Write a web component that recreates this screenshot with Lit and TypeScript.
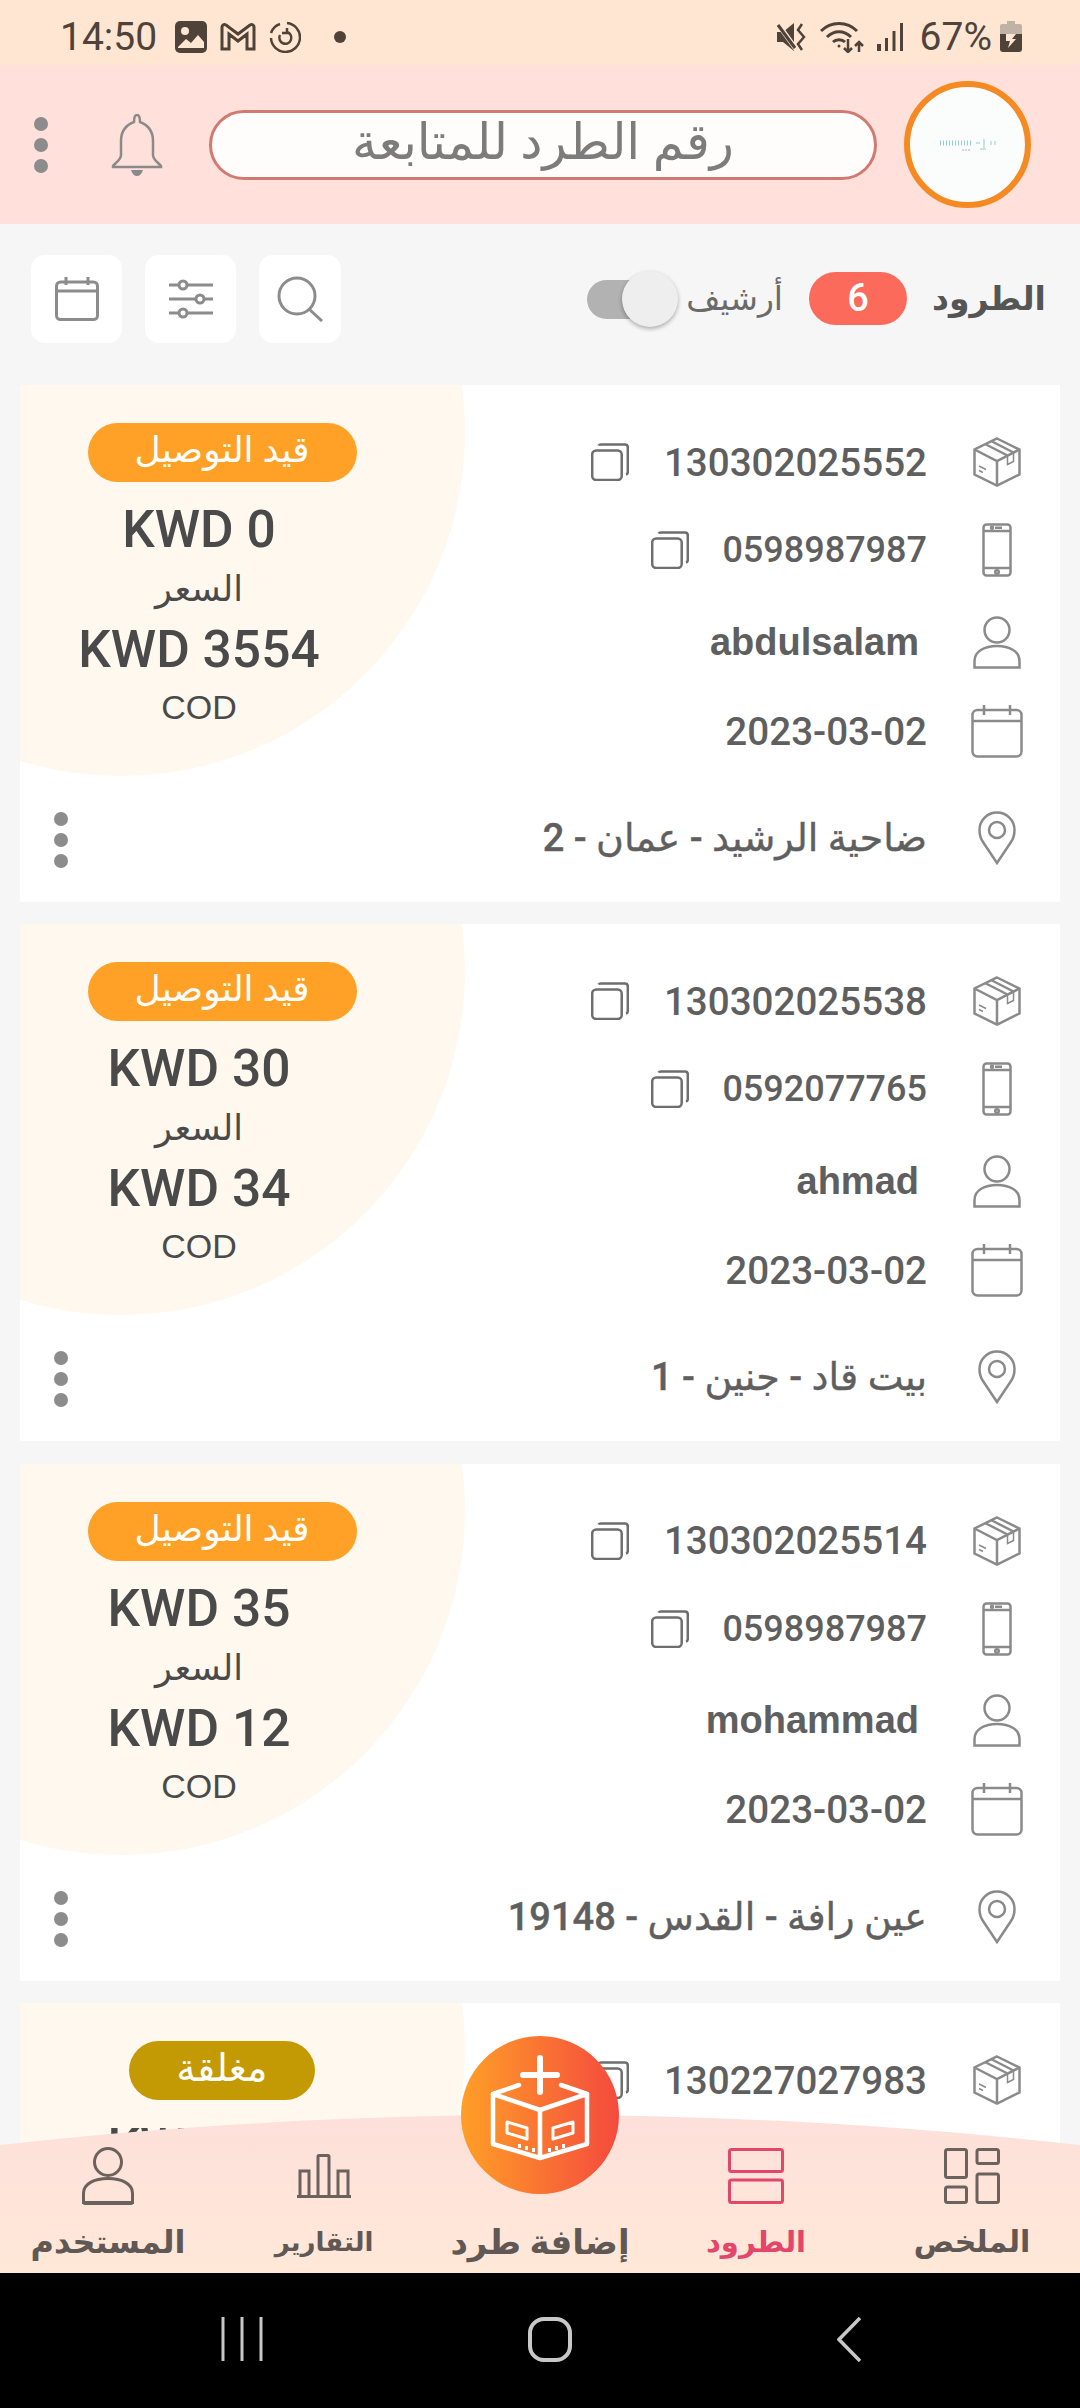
import {css, html, LitElement, svg} from 'lit';
import {customElement} from 'lit/decorators.js';

type Parcel = {
  code: string;
  phone?: string;
  name?: string;
  date?: string;
  address?: string;
  amount: string;
  total?: string;
  status: string;
  closed?: boolean;
};

// the last card runs under the tab bar, only its top part is ever seen
const PARCELS: Parcel[] = [
  {code: '130302025552', phone: '0598987987', name: 'abdulsalam', date: '2023-03-02', address: 'ضاحية الرشيد - عمان - 2', amount: 'KWD 0', total: 'KWD 3554', status: 'قيد التوصيل'},
  {code: '130302025538', phone: '0592077765', name: 'ahmad', date: '2023-03-02', address: 'بيت قاد - جنين - 1', amount: 'KWD 30', total: 'KWD 34', status: 'قيد التوصيل'},
  {code: '130302025514', phone: '0598987987', name: 'mohammad', date: '2023-03-02', address: 'عين رافة - القدس - 19148', amount: 'KWD 35', total: 'KWD 12', status: 'قيد التوصيل'},
  {code: '130227027983', amount: 'KWD 20', status: 'مغلقة', closed: true},
];

const icon = (w: number, h: number, body: unknown, cls = 'line') => html`
  <svg class=${cls} width=${w} height=${h} viewBox="0 0 ${w} ${h}">${body}</svg>
`;

const boxIcon = icon(48, 50, svg`
  <path d="M24 1.500 46.500 12.500V37.500L24 48.500 1.500 37.500V12.500Z" />
  <path d="M1.500 12.500 24 24 46.500 12.500M24 24V48.500M12 7 34.500 18.500M18 4 40.500 15.500" />
  <path d="M34.500 18.500V27.500L40.500 24.500V15.500M6 29l7 3.500M6 33.500l4 2" stroke-width="1.500" />
`);
const phoneIcon = icon(30, 54, svg`
  <rect x="1.500" y="1.500" width="27" height="51" rx="3" />
  <path d="M1.500 8H28.500M1.500 45H28.500M13 4.800H20" />
  <circle cx="15" cy="49" r="1.800" />
  <circle cx="10" cy="4.800" r="1" />
`);
const personIcon = icon(48, 53, svg`
  <circle cx="24" cy="14" r="12.500" />
  <path d="M1.500 51.500V45C1.500 35 12 30 24 30S46.500 35 46.500 45V51.500Z" />
`);
const calendarIcon = icon(52, 53, svg`
  <rect x="1.500" y="5" width="49" height="46.500" rx="5" />
  <path d="M1.500 16H50.500M13 0V10M39 0V10" />
`);
const pinIcon = icon(38, 54, svg`
  <path d="M19 52 5 31C1.500 26 1.500 23 1.500 19A17.500 17.500 0 0 1 36.500 19C36.500 23 36.500 26 33 31Z" />
  <circle cx="19" cy="19" r="8" />
`);
const copyIcon = icon(38, 38, svg`
  <rect x="1.200" y="7.500" width="29.500" height="29.500" rx="4" />
  <path d="M7.500 2.500Q8 1.500 10 1.500H34Q36.800 1.500 36.800 4.500V29Q36.800 31 35 31.500" />
`, 'line copy');

const bellIcon = icon(52, 64, svg`
  <path d="M26 2C23 2 23 6 23 9 15 12 10 18 10 28V42C10 47 5 49 2 53V54H50V53C47 49 42 47 42 42V28C42 18 37 12 29 9 29 6 29 2 26 2Z" />
  <path d="M20 57H32Q30 63 26 63T20 57Z" fill="#8a8a8a" stroke="none" />
`, 'line thin');
const searchIcon = icon(46, 46, svg`
  <circle cx="20" cy="20" r="18" />
  <path d="M32 33 45 45" />
`, 'line tool');
const slidersIcon = icon(46, 42, svg`
  <path d="M1 7H11M19 7H45M1 21H28M36 21H45M1 35H11M19 35H45" />
  <circle cx="15" cy="7" r="4" />
  <circle cx="32" cy="21" r="4" />
  <circle cx="15" cy="35" r="4" />
`, 'line tool');
const calendarTool = icon(44, 44, svg`
  <rect x="1.500" y="5" width="41" height="37.500" rx="4" />
  <path d="M1.500 14H42.500M11 0V8M33 0V8" />
`, 'line tool');

const navSummary = icon(56, 56, svg`
  <rect x="1.500" y="1.500" width="21" height="28" rx="2" />
  <rect x="1.500" y="39" width="21" height="15.500" rx="2" />
  <rect x="33" y="1.500" width="21.500" height="14" rx="2" />
  <rect x="33" y="26" width="21.500" height="28.500" rx="2" />
`, 'line nav');
const navParcels = icon(56, 56, svg`
  <rect x="1.500" y="1.500" width="53" height="22" rx="2" />
  <rect x="1.500" y="32" width="53" height="22.500" rx="2" />
`, 'line nav active');
const navReports = icon(56, 44, svg`
  <path d="M1 42.500H55" />
  <path d="M4 42V17H13V42M22 42V2.500Q22 1.500 23 1.500H32Q33 1.500 33 2.500V42M42 42V17H52V42" />
`, 'line nav');
const navUser = icon(52, 58, svg`
  <circle cx="26" cy="15" r="13.500" />
  <path d="M1.500 55.500V46C1.500 37 12 31.500 26 31.500S50.500 37 50.500 46V55.500Z" />
  <path d="M1.500 56H50.500" stroke-width="4" />
`, 'line nav');

const fabIcon = icon(158, 158, svg`
  <path d="M79 22V56M62 39H96" stroke-width="6" stroke-linecap="round" />
  <path d="M32 58 79 74 126 58V108L79 122 32 108ZM79 74V122" />
  <path d="M32 58 58 49M126 58 100 49" stroke-linecap="round" />
  <path d="M46 86 66 92V103L46 97ZM112 86 92 92V103L112 97Z" stroke-width="3" />
  <path d="M57 110h3M64 112h3M71 114h3M87 114h3M94 112h3M101 110h3" stroke-width="4" />
`, 'fab-svg');

const statusLeft = html`
  <svg width="32" height="32" viewBox="0 0 32 32">
    <rect width="32" height="32" rx="5" fill="#4e4239" />
    <circle cx="10" cy="10" r="4" fill="#ffe6d2" />
    <path d="M3 26 11 18 16 22 23 14 29 21V27H3Z" fill="#ffe6d2" />
  </svg>
  <svg width="36" height="28" viewBox="0 0 36 28" fill="none" stroke="#4e4239" stroke-width="3">
    <path d="M2 26V4C2 2 4 1 6 2L18 11 30 2C32 1 34 2 34 4V26H27V11L18 18 9 11V26Z" />
  </svg>
  <svg width="32" height="32" viewBox="0 0 32 32" fill="none" stroke="#4e4239" stroke-width="2.500">
    <path d="M18 2A14.500 14.500 0 1 1 2 17" />
    <path d="M2 12A14.500 14.500 0 0 1 11 3" />
    <path d="M11 14A6 6 0 1 0 18 11M18 7V12H13" />
  </svg>
  <span class="status-dot"></span>
`;

const statusRight = html`
  <svg width="30" height="28" viewBox="0 0 30 28" fill="#4e4239">
    <path d="M0 9H6L17 0V28L6 19H0Z" />
    <path d="M1 1 19 26" stroke="#ffe6d2" stroke-width="5" />
    <path d="M1 2 18 25" stroke="#4e4239" stroke-width="3" />
    <path d="M25 1 21 7 27 14 21 21 25 27" fill="none" stroke="#4e4239" stroke-width="2.500" />
  </svg>
  <svg width="44" height="32" viewBox="0 0 44 32" fill="none" stroke="#4e4239" stroke-width="3">
    <path d="M1 10C11 0 27 0 37 10M7 16C14 9 24 9 31 16M13 21C16 18 22 18 25 21" />
    <circle cx="19" cy="25" r="1.500" fill="#4e4239" stroke="none" />
    <path d="M28 18V31M24 27 28 31 32 27M39 31V21M35 25 39 21 43 25" stroke-width="2.500" />
  </svg>
  <svg width="27" height="28" viewBox="0 0 27 28" fill="#4e4239">
    <rect x="0" y="21" width="4" height="7" />
    <rect x="8" y="15" width="3" height="13" />
    <rect x="15.500" y="8" width="3" height="20" />
    <rect x="23" y="0" width="3" height="28" />
  </svg>
  <span class="battery-text">67%</span>
  <svg width="22" height="31" viewBox="0 0 22 31">
    <path d="M7 0H15V3H20Q22 3 22 5V13H0V5Q0 3 2 3H7Z" fill="#bfb3a6" />
    <path d="M0 13H22V28Q22 31 19 31H3Q0 31 0 28Z" fill="#4e4239" />
    <path d="M6 13H16L12 18H16L8 27 10 20H6Z" fill="#ffe6d2" />
  </svg>
`;

@customElement('app-root')
export class AppRoot extends LitElement {
  static override styles = css`
    :host {
      display: block;
      width: 1080px;
      height: 2408px;
      font-family: Roboto, 'DejaVu Sans', sans-serif;
    }
    .app {
      position: relative;
      display: flex;
      flex-direction: column;
      height: 2408px;
      overflow: hidden;
      background: #f6f6f6;
    }
    svg {
      display: block;
      flex: none;
    }
    .line {
      fill: none;
      stroke: #8a8a8a;
      stroke-width: 2.5;
    }
    .copy {
      stroke: #6e6e6e;
    }
    .thin {
      stroke-width: 2.5;
    }
    .tool {
      stroke: #8c8c8c;
      stroke-width: 3;
    }
    .nav {
      stroke: #6b625e;
      stroke-width: 3;
    }
    .nav.active {
      stroke: #e4456a;
    }

    .status {
      display: flex;
      align-items: center;
      justify-content: space-between;
      height: 65px;
      padding: 8px 58px 0 60px;
      background: #ffe6d2;
      color: #4e4239;
      font-size: 39px;
      box-sizing: border-box;
    }
    .status-side {
      display: flex;
      align-items: center;
      gap: 13px;
    }
    .status-dot {
      width: 12px;
      height: 12px;
      margin-left: 20px;
      border-radius: 50%;
      background: #4e4239;
    }
    .battery-text {
      margin: 0 -5px 0 3px;
    }
    .time {
      margin-right: 5px;
    }

    .header {
      display: flex;
      align-items: center;
      height: 159px;
      padding: 0 48px 0 34px;
      background: #ffe0da;
      box-sizing: border-box;
    }
    .dots {
      display: flex;
      flex-direction: column;
      gap: 7px;
    }
    .dots span {
      width: 14px;
      height: 14px;
      border-radius: 50%;
      background: #8c8c8c;
    }
    .bell {
      margin: 0 46px 0 63px;
    }
    .track-field {
      width: 668px;
      height: 70px;
      border: 3px solid #d07a72;
      border-radius: 36px;
      background: #fffdfb;
      box-sizing: border-box;
      color: #7c7c7c;
      font-size: 50px;
      line-height: 58px;
      text-align: center;
      white-space: nowrap;
    }
    .logo {
      display: flex;
      align-items: center;
      justify-content: center;
      width: 127px;
      height: 127px;
      margin-left: 27px;
      border: 6px solid #f58a23;
      border-radius: 50%;
      background: #fafdfc;
      box-sizing: border-box;
    }

    .toolbar {
      display: flex;
      align-items: flex-start;
      height: 161px;
      padding: 31px 33px 0 31px;
      box-sizing: border-box;
    }
    .tool-btn {
      display: flex;
      align-items: center;
      justify-content: center;
      width: 91px;
      height: 88px;
      margin-right: 23px;
      border-radius: 14px;
      background: #fff;
    }
    .tool-btn.narrow {
      width: 82px;
    }
    .archive {
      display: flex;
      align-items: center;
      height: 88px;
      margin-left: auto;
    }
    .switch {
      position: relative;
      width: 91px;
      height: 39px;
      margin-right: 11px;
    }
    .switch-track {
      width: 55px;
      height: 39px;
      border-radius: 20px 0 0 20px;
      background: #b2b2b2;
    }
    .switch-knob {
      position: absolute;
      top: -9px;
      right: 0;
      width: 56px;
      height: 56px;
      border-radius: 50%;
      background: #eeeeee;
      box-shadow: 0 2px 4px rgba(0, 0, 0, 0.3);
    }
    .archive-label {
      width: 94px;
      margin-top: -2px;
      color: #6a6a6a;
      font-size: 33px;
      text-align: center;
      white-space: nowrap;
    }
    .count {
      width: 98px;
      height: 53px;
      margin: 17px 0 0 26px;
      border-radius: 27px;
      background: #fb6a5a;
      color: #fff;
      font-size: 38px;
      font-weight: 500;
      line-height: 53px;
      text-align: center;
    }
    .page-title {
      width: 116px;
      margin: 17px 0 0 24px;
      color: #555;
      font-size: 33px;
      font-weight: 700;
      line-height: 53px;
      text-align: center;
      white-space: nowrap;
    }

    .list {
      display: flex;
      flex: 1;
      flex-direction: column;
      gap: 22.4px;
      min-height: 0;
      padding: 0 20px;
      overflow: hidden;
    }
    .card {
      position: relative;
      display: flex;
      flex: none;
      justify-content: space-between;
      height: 517px;
      background: #fff;
      overflow: hidden;
    }
    .blob {
      position: absolute;
      top: -297px;
      left: -243px;
      width: 688px;
      height: 688px;
      border-radius: 50%;
      background: #fff8ef;
    }
    .price {
      position: relative;
      display: flex;
      flex-direction: column;
      align-items: center;
      width: 358px;
      padding-top: 38px;
      box-sizing: border-box;
      color: #4a4a4a;
    }
    .pill {
      width: 269px;
      height: 59px;
      margin: 0 0 18px 46px;
      border-radius: 30px;
      background: #ffa126;
      color: #fff;
      font-size: 36px;
      line-height: 54px;
      text-align: center;
      white-space: nowrap;
    }
    .pill.closed {
      width: 186px;
      background: #c49a04;
      font-size: 38px;
    }
    .amount {
      font-size: 51.5px;
      font-weight: 500;
      line-height: 60px;
    }
    .price-label {
      font-size: 35px;
      line-height: 60px;
    }
    .method {
      font-family: 'Liberation Sans', sans-serif;
      font-size: 34px;
      line-height: 54px;
    }
    .info {
      position: relative;
      display: flex;
      flex-direction: column;
      padding-top: 33px;
    }
    .row {
      display: flex;
      align-items: center;
      justify-content: flex-end;
      height: 88px;
      color: #5f5f5f;
      font-size: 38.6px;
      font-weight: 500;
      white-space: nowrap;
    }
    .row.phone-row {
      font-size: 36px;
    }
    .row.phone-row .copy {
      margin-right: 33px;
    }
    .row.name-row {
      margin-top: 4px;
    }
    .row.date-row {
      margin-top: 1px;
    }
    .row.address-row {
      margin-top: 19px;
      font-size: 38px;
      -webkit-text-stroke: 0.4px #5f5f5f;
    }
    .row.name-row .value {
      padding-right: 8px;
      font-family: 'Liberation Sans', sans-serif;
      font-size: 38px;
      font-weight: 700;
    }
    .row .copy {
      margin-right: 35px;
    }
    .row-icon {
      display: flex;
      align-items: center;
      justify-content: center;
      width: 76px;
      margin: 0 25px 0 32px;
    }
    .card-dots {
      position: absolute;
      left: 34px;
      bottom: 34px;
    }
    .card-dots.dots {
      gap: 7px;
    }

    .tabs {
      position: absolute;
      left: 0;
      right: 0;
      bottom: 135px;
      display: grid;
      grid-template-columns: repeat(5, 216px);
      height: 158px;
      padding-top: 25px;
      box-sizing: border-box;
    }
    .tabs-bg {
      position: absolute;
      inset: 0;
      background: linear-gradient(#fde0da, #ffe8d8);
      clip-path: circle(4875px at 50% 4875px);
    }
    .tab {
      position: relative;
      display: flex;
      flex-direction: column;
      align-items: center;
      color: #5f5854;
      font-size: 30px;
      font-weight: 700;
      white-space: nowrap;
    }
    .tab.active {
      color: #e4456a;
      font-size: 29px;
    }
    .tab.user {
      font-size: 32px;
    }
    .tab.reports {
      font-size: 26px;
    }
    .tab-icon {
      display: flex;
      align-items: center;
      justify-content: center;
      height: 72px;
      margin-bottom: 10px;
    }
    .tab-label {
      line-height: 40px;
    }
    .tab.add {
      font-size: 34px;
    }
    .fab {
      position: absolute;
      top: -79px;
      left: 461px;
      width: 158px;
      height: 158px;
      border-radius: 50%;
      background: linear-gradient(90deg, #ff9f27, #f44a3e);
    }
    .fab-svg {
      fill: none;
      stroke: #fff;
      stroke-width: 4.5;
      stroke-linejoin: round;
    }

    .system-nav {
      display: flex;
      flex: none;
      align-items: flex-start;
      justify-content: space-between;
      height: 135px;
      padding: 44px 218px 0 221px;
      background: #000;
      box-sizing: border-box;
    }
  `;

  private renderCard(p: Parcel) {
    return html`
      <article class="card">
        <div class="blob"></div>
        <div class="price">
          <div class="pill ${p.closed ? 'closed' : ''}" dir="rtl">${p.status}</div>
          <div class="amount">${p.amount}</div>
          ${p.total
            ? html`
                <div class="price-label" dir="rtl">السعر</div>
                <div class="amount">${p.total}</div>
                <div class="method">COD</div>
              `
            : ''}
        </div>
        <div class="info">
          <div class="row">
            ${copyIcon}<span class="value">${p.code}</span>
            <div class="row-icon">${boxIcon}</div>
          </div>
          ${p.phone
            ? html`
                <div class="row phone-row">
                  ${copyIcon}<span class="value">${p.phone}</span>
                  <div class="row-icon">${phoneIcon}</div>
                </div>
                <div class="row name-row">
                  <span class="value">${p.name}</span>
                  <div class="row-icon">${personIcon}</div>
                </div>
                <div class="row date-row">
                  <span class="value">${p.date}</span>
                  <div class="row-icon">${calendarIcon}</div>
                </div>
                <div class="row address-row">
                  <span class="value" dir="rtl">${p.address}</span>
                  <div class="row-icon">${pinIcon}</div>
                </div>
              `
            : ''}
        </div>
        <div class="dots card-dots"><span></span><span></span><span></span></div>
      </article>
    `;
  }

  override render() {
    return html`
      <div class="app">
        <div class="status">
          <div class="status-side"><span class="time">14:50</span>${statusLeft}</div>
          <div class="status-side">${statusRight}</div>
        </div>

        <header class="header">
          <div class="dots"><span></span><span></span><span></span></div>
          <div class="bell">${bellIcon}</div>
          <div class="track-field" dir="rtl">رقم الطرد للمتابعة</div>
          <div class="logo">
            <svg width="56" height="14" viewBox="0 0 56 14" fill="none" stroke="#8fd0ca">
              <path d="M0 5H32" stroke-width="5" stroke-dasharray="1 2" />
              <path d="M36 5H40M44 1V10M40 11H46M51 3V7M55 3V7" stroke-width="1" />
              <path d="M22 12H30" stroke="#c9c9c9" stroke-width="1.500" stroke-dasharray="2 1" />
            </svg>
          </div>
        </header>

        <div class="toolbar">
          <div class="tool-btn">${calendarTool}</div>
          <div class="tool-btn">${slidersIcon}</div>
          <div class="tool-btn narrow">${searchIcon}</div>
          <div class="archive">
            <div class="switch">
              <div class="switch-track"></div>
              <div class="switch-knob"></div>
            </div>
            <div class="archive-label" dir="rtl">أرشيف</div>
          </div>
          <div class="count">6</div>
          <div class="page-title" dir="rtl">الطرود</div>
        </div>

        <div class="list">${PARCELS.map((p) => this.renderCard(p))}</div>

        <nav class="tabs">
          <div class="tabs-bg"></div>
          <div class="tab user">
            <div class="tab-icon">${navUser}</div>
            <div class="tab-label" dir="rtl">المستخدم</div>
          </div>
          <div class="tab reports">
            <div class="tab-icon">${navReports}</div>
            <div class="tab-label" dir="rtl">التقارير</div>
          </div>
          <div class="tab add">
            <div class="tab-icon"></div>
            <div class="tab-label" dir="rtl">إضافة طرد</div>
          </div>
          <div class="tab active">
            <div class="tab-icon">${navParcels}</div>
            <div class="tab-label" dir="rtl">الطرود</div>
          </div>
          <div class="tab">
            <div class="tab-icon">${navSummary}</div>
            <div class="tab-label" dir="rtl">الملخص</div>
          </div>
          <div class="fab">${fabIcon}</div>
        </nav>

        <div class="system-nav">
          <svg width="42" height="44" viewBox="0 0 42 44" stroke="#c8c8c8" stroke-width="3">
            <path d="M2 0V44M21 0V44M40 0V44" />
          </svg>
          <svg width="44" height="45" viewBox="0 0 44 45" fill="none" stroke="#c8c8c8" stroke-width="4">
            <rect x="2" y="2" width="40" height="41" rx="14" />
          </svg>
          <svg width="25" height="45" viewBox="0 0 25 45" fill="none" stroke="#c8c8c8" stroke-width="3.500">
            <path d="M23 1 2 22.500 23 44" />
          </svg>
        </div>
      </div>
    `;
  }
}
